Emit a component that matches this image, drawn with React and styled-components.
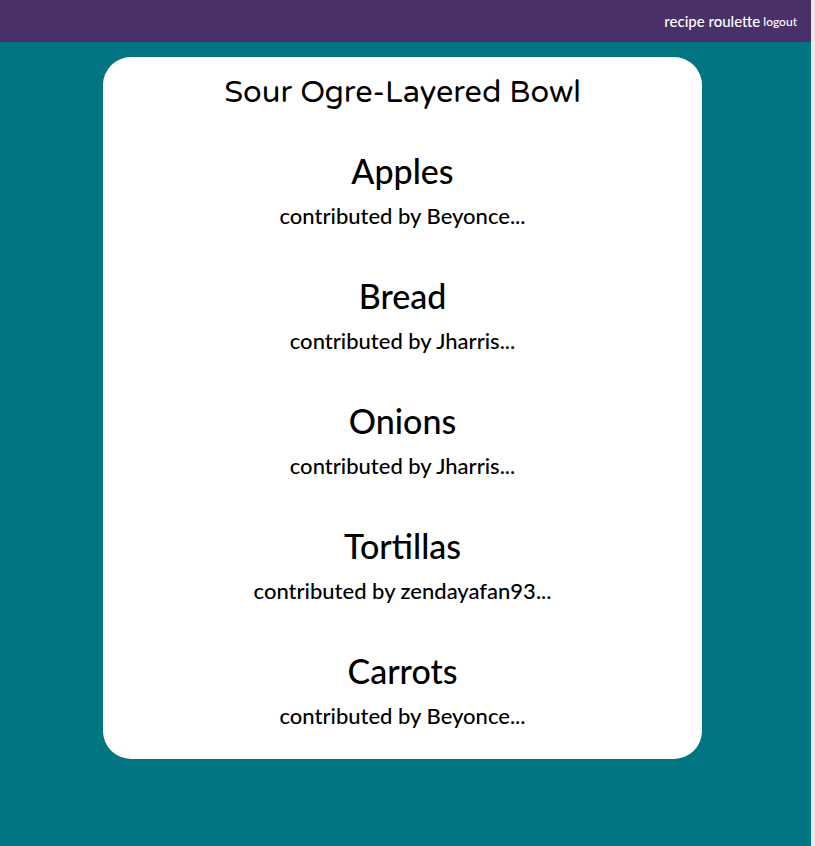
import React from 'react'
import styled, { createGlobalStyle } from 'styled-components'

const GlobalStyle = createGlobalStyle`
  html, body {
    margin: 0;
    padding: 0;
    background: #e9e9ea;
  }
  body {
    font-family: Lato, "Liberation Sans", sans-serif;
  }
`

const Page = styled.div`
  width: calc(100% - 4px);
  min-height: 846px;
  background: #017581;
`

const NavBar = styled.header`
  height: 42px;
  background: #4a3069;
  display: flex;
  align-items: center;
  justify-content: flex-end;
  padding: 0 14px;
  color: #fff;
`

const Brand = styled.span`
  font-size: 15px;
  font-weight: 500;
  margin-right: 3px;
`

const Logout = styled.span`
  font-size: 12px;
  font-weight: 500;
`

const Card = styled.main`
  width: 599px;
  margin: 15px 0 0 103px;
  background: #fff;
  border-radius: 28px;
  padding: 16px 0 29px;
  display: flex;
  flex-direction: column;
  align-items: center;
  text-align: center;
  color: #000;
`

const Title = styled.h1`
  margin: 0 0 38px;
  font-family: "Varela Round", Lato, sans-serif;
  font-size: 30.7px;
  font-weight: 400;
  line-height: 40px;
`

const Ingredient = styled.section`
  display: flex;
  flex-direction: column;
  align-items: center;
  margin-bottom: 46px;
  &:last-child {
    margin-bottom: 0;
  }
`

const Name = styled.h2`
  margin: 0;
  font-size: 34px;
  font-weight: 500;
  line-height: 40px;
`

const Contributor = styled.p`
  margin: 11px 0 0;
  font-size: 22px;
  font-weight: 500;
  line-height: 28px;
`

const ingredients = [
  { name: 'Apples', user: 'Beyonce' },
  { name: 'Bread', user: 'Jharris' },
  { name: 'Onions', user: 'Jharris' },
  { name: 'Tortillas', user: 'zendayafan93' },
  { name: 'Carrots', user: 'Beyonce' },
]

export default function App() {
  return (
    <>
      <GlobalStyle />
      <Page>
        <NavBar>
          <Brand>recipe roulette</Brand>
          <Logout>logout</Logout>
        </NavBar>
        <Card>
          <Title>Sour Ogre-Layered Bowl</Title>
          {ingredients.map((item) => (
            <Ingredient key={item.name}>
              <Name>{item.name}</Name>
              <Contributor>contributed by {item.user}...</Contributor>
            </Ingredient>
          ))}
        </Card>
      </Page>
    </>
  )
}
